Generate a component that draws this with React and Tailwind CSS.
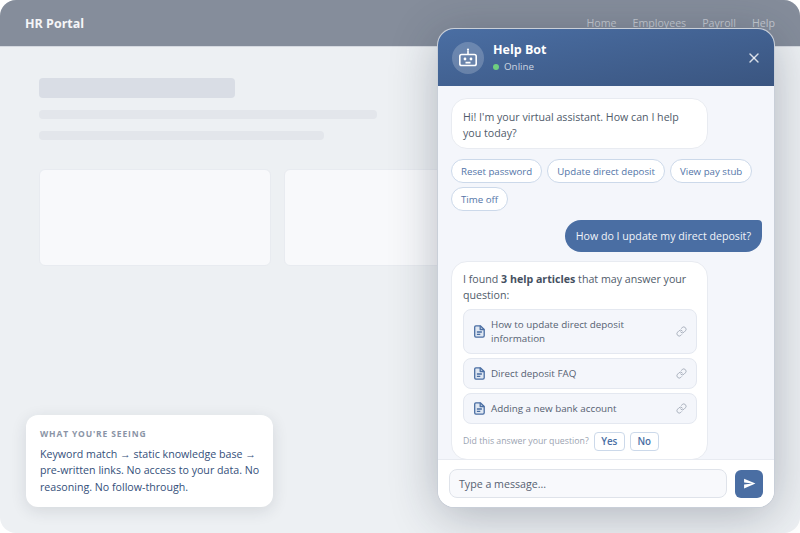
import { Link, X } from "lucide-react";

const suggestions = ["Reset password", "Update direct deposit", "View pay stub", "Time off"];

const articles = ["How to update direct deposit information", "Direct deposit FAQ", "Adding a new bank account"];

const navLinks = ["Home", "Employees", "Payroll", "Help"];

const DocIcon = () => (
  <svg width="11" height="13" viewBox="0 0 11 13" fill="none" stroke="#4a6ea3" strokeWidth="1.3" strokeLinejoin="round" className="shrink-0">
    <path d="M1.9 0.8h4.4l3.9 3.7v6.3a1.3 1.3 0 0 1-1.3 1.3H1.9a1.3 1.3 0 0 1-1.2-1.3V2.1a1.3 1.3 0 0 1 1.2-1.3z" fill="#dfe7f2" />
    <path d="M6.2 0.8v3.7h4M2.9 7h5M2.9 9.4h3.4" />
  </svg>
);

const ArticleLink = ({ title }) => (
  <div className="flex items-center gap-[6px] rounded-lg border border-[#e4e8f0] bg-[#f4f6fb] py-[7.5px] pl-[10px] pr-[9px]">
    <DocIcon />
    <span className="flex-1 text-[9.8px] leading-[14px] text-[#566172]">{title}</span>
    <Link size={11} className="shrink-0 text-[#a5adba]" />
  </div>
);

const BotIcon = () => (
  <svg width="20" height="20" viewBox="0 0 20 20" fill="none" stroke="white" strokeWidth="1.6">
    <circle cx="10" cy="1.6" r="1.1" fill="white" stroke="none" />
    <path d="M10 2.5v4" />
    <rect x="1.8" y="6.5" width="16.4" height="11" rx="1.8" />
    <circle cx="7" cy="11" r="1.4" fill="white" stroke="none" />
    <circle cx="13" cy="11" r="1.4" fill="white" stroke="none" />
    <path d="M7.5 14.6h5" />
  </svg>
);

const SendIcon = () => (
  <svg width="13" height="13" viewBox="0 0 24 24" fill="white">
    <path d="M2 21l21-9L2 3v7l15 2-15 2z" />
  </svg>
);

const ChatWidget = () => (
  <div className="absolute left-[438px] top-[29px] flex h-[478px] w-[336px] flex-col overflow-hidden rounded-2xl bg-white shadow-[0_8px_48px_rgba(30,41,59,0.3)] ring-1 ring-[#c9cfd8]">
    <div className="flex h-[57px] shrink-0 items-center gap-[9px] bg-gradient-to-br from-[#4a6ea3] to-[#3a5580] pl-[14px] pr-[12px]">
      <div className="flex h-8 w-8 items-center justify-center rounded-full bg-white/20">
        <BotIcon />
      </div>
      <div className="flex-1">
        <div className="text-[12.5px] font-bold leading-[18px] text-white">Help Bot</div>
        <div className="flex items-center gap-[5px] pt-px text-[9.8px] leading-[14px] text-white/75">
          <span className="h-[6px] w-[6px] rounded-full bg-[#6fcf7f]" />
          Online
        </div>
      </div>
      <X size={16} strokeWidth={2} className="text-white/80" />
    </div>

    <div className="flex min-h-0 flex-1 flex-col items-start overflow-hidden bg-[#f4f6fb] pl-[13px] pr-3 pt-3">
      <div className="w-[257px] rounded-2xl border border-[#e8ebf1] bg-white pb-[7px] pl-[11px] pr-[10px] pt-[10px] text-[10.65px] leading-[16px] text-[#505b6a]">
        Hi! I'm your virtual assistant. How can I help you today?
      </div>

      <div className="mt-[10px] flex w-full flex-wrap gap-x-[5px] gap-y-[4px]">
        {suggestions.map((s) => (
          <span key={s} className="rounded-full border border-[#ccd9ea] bg-white px-[9px] pb-[3px] pt-[5px] text-[9.7px] leading-[14px] text-[#5475a8]">
            {s}
          </span>
        ))}
      </div>

      <div className="mt-[9px] self-end rounded-2xl rounded-tr-[4px] bg-[#4a6ea3] px-[11px] py-[8px] text-[10.65px] leading-[16px] text-[#f1f4f9]">
        How do I update my direct deposit?
      </div>

      <div className="mt-[9px] w-[257px] shrink-0 rounded-2xl border border-[#e8ebf1] bg-white pb-[8px] pl-[11px] pr-[10px] pt-[9px] text-[10.65px] leading-[16px] text-[#505b6a]">
        <p>
          I found <strong className="font-bold text-[#45505f]">3 help articles</strong> that may answer your question:
        </p>
        <div className="mt-[6px] flex flex-col gap-[4px]">
          {articles.map((a) => (
            <ArticleLink key={a} title={a} />
          ))}
        </div>
        <div className="mt-[8px] flex items-center gap-[5px]">
          <span className="-translate-y-px text-[8.75px] text-[#9aa3b1]">Did this answer your question?</span>
          <span className="rounded border border-[#ccd9ea] bg-white px-[6.5px] py-[1px] text-[9.8px] font-semibold leading-[15px] text-[#4a6ea3]">Yes</span>
          <span className="rounded border border-[#ccd9ea] bg-white px-[6.5px] py-[1px] text-[9.8px] font-semibold leading-[15px] text-[#4a6ea3]">No</span>
        </div>
      </div>
    </div>

    <div className="flex h-[48px] shrink-0 items-center gap-[8px] border-t border-[#e8ebf1] bg-white pl-[11px] pr-[11px]">
      <div className="flex h-[29px] flex-1 items-center rounded-lg border border-[#dfe3ea] bg-[#f8f9fc] px-[9px] pt-[2px] text-[10.65px] text-[#566172]">
        Type a message...
      </div>
      <div className="flex h-[28px] w-[28px] items-center justify-center rounded-md bg-[#4a6ea3]">
        <SendIcon />
      </div>
    </div>
  </div>
);

export default function App() {
  return (
    <div className="relative h-[533px] w-[800px] overflow-hidden bg-white font-['Open_Sans',sans-serif]">
      <div className="flex h-full flex-col overflow-hidden rounded-2xl bg-[#edf0f3]">
        <header className="flex h-[47px] shrink-0 items-center justify-between border-b border-[#d5d9e0] bg-[#858d9b] px-[25px] pt-[2px]">
          <span className="text-[12.5px] font-bold text-[#f5f6f8]">HR Portal</span>
          <nav className="flex gap-[16px] text-[10.65px] text-[#c3c8d0]">
            {navLinks.map((n) => (
              <span key={n}>{n}</span>
            ))}
          </nav>
        </header>

        <main className="px-[39px] pt-[31px]">
          <div className="h-5 w-[196px] rounded bg-[#d9dde5]" />
          <div className="mt-3 h-[9px] w-[338px] rounded bg-[#e3e6eb]" />
          <div className="mt-3 h-[9px] w-[285px] rounded bg-[#e3e6eb]" />
          <div className="mt-[29px] flex gap-[13px]">
            <div className="h-[97px] w-[232px] rounded-md border border-[#e8ebf0] bg-[#f8f9fb]" />
            <div className="h-[97px] w-[232px] rounded-md border border-[#e8ebf0] bg-[#f8f9fb]" />
          </div>
        </main>
      </div>

      <div className="absolute left-[26px] top-[415px] w-[247px] rounded-xl bg-white pb-[12px] pl-[14px] pr-[12px] pt-[13px] shadow-[0_4px_16px_rgba(30,41,59,0.12)]">
        <div className="text-[8.5px] font-bold uppercase leading-[12px] tracking-[0.1em] text-[#8a94a6]">What you're seeing</div>
        <p className="mt-[6px] text-[10.65px] leading-[16.3px] text-[#344f7a]">
          Keyword match → static knowledge base → pre-written links. No access to your data. No reasoning. No follow-through.
        </p>
      </div>

      <ChatWidget />
    </div>
  );
}
